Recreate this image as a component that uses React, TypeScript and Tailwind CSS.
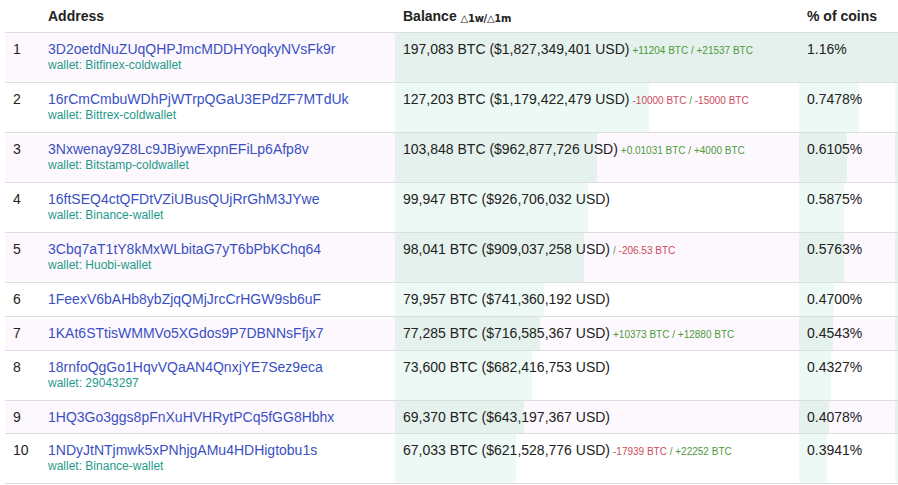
import React from "react";

type Row = {
  n: number;
  addr: string;
  wallet?: string;
  bal: string;
  d1?: { t: string; c: "g" | "r" };
  d2?: { t: string; c: "g" | "r" };
  pct: string;
  bw: number;
  pw: number;
  h: number;
};

const rows: Row[] = [
  { n: 1, addr: "3D2oetdNuZUqQHPJmcMDDHYoqkyNVsFk9r", wallet: "Bitfinex-coldwallet", bal: "197,083 BTC ($1,827,349,401 USD)", d1: { t: "+11204 BTC", c: "g" }, d2: { t: "+21537 BTC", c: "g" }, pct: "1.16%", bw: 404, pw: 96, h: 50 },
  { n: 2, addr: "16rCmCmbuWDhPjWTrpQGaU3EPdZF7MTdUk", wallet: "Bittrex-coldwallet", bal: "127,203 BTC ($1,179,422,479 USD)", d1: { t: "-10000 BTC", c: "r" }, d2: { t: "-15000 BTC", c: "r" }, pct: "0.7478%", bw: 254, pw: 60, h: 50 },
  { n: 3, addr: "3Nxwenay9Z8Lc9JBiywExpnEFiLp6Afp8v", wallet: "Bitstamp-coldwallet", bal: "103,848 BTC ($962,877,726 USD)", d1: { t: "+0.01031 BTC", c: "g" }, d2: { t: "+4000 BTC", c: "g" }, pct: "0.6105%", bw: 202, pw: 48, h: 50 },
  { n: 4, addr: "16ftSEQ4ctQFDtVZiUBusQUjRrGhM3JYwe", wallet: "Binance-wallet", bal: "99,947 BTC ($926,706,032 USD)", pct: "0.5875%", bw: 193, pw: 45, h: 50 },
  { n: 5, addr: "3Cbq7aT1tY8kMxWLbitaG7yT6bPbKChq64", wallet: "Huobi-wallet", bal: "98,041 BTC ($909,037,258 USD)", d2: { t: "-206.53 BTC", c: "r" }, pct: "0.5763%", bw: 189, pw: 45, h: 50 },
  { n: 6, addr: "1FeexV6bAHb8ybZjqQMjJrcCrHGW9sb6uF", bal: "79,957 BTC ($741,360,192 USD)", pct: "0.4700%", bw: 149, pw: 35, h: 34 },
  { n: 7, addr: "1KAt6STtisWMMVo5XGdos9P7DBNNsFfjx7", bal: "77,285 BTC ($716,585,367 USD)", d1: { t: "+10373 BTC", c: "g" }, d2: { t: "+12880 BTC", c: "g" }, pct: "0.4543%", bw: 145, pw: 34, h: 34 },
  { n: 8, addr: "18rnfoQgGo1HqvVQaAN4QnxjYE7Sez9eca", wallet: "29043297", bal: "73,600 BTC ($682,416,753 USD)", pct: "0.4327%", bw: 137, pw: 32, h: 50 },
  { n: 9, addr: "1HQ3Go3ggs8pFnXuHVHRytPCq5fGG8Hbhx", bal: "69,370 BTC ($643,197,367 USD)", pct: "0.4078%", bw: 129, pw: 30, h: 33 },
  { n: 10, addr: "1NDyJtNTjmwk5xPNhjgAMu4HDHigtobu1s", wallet: "Binance-wallet", bal: "67,033 BTC ($621,528,776 USD)", d1: { t: "-17939 BTC", c: "r" }, d2: { t: "+22252 BTC", c: "g" }, pct: "0.3941%", bw: 121, pw: 28, h: 50 },
];

function Delta({ d }: { d: { t: string; c: "g" | "r" } }) {
  return <span className={d.c === "g" ? "text-[#4f9a3c]" : "text-[#cc4a5c]"}>{d.t}</span>;
}

export default function App() {
  return (
    <div className="w-[898px] h-[485px] bg-white pl-[5px] font-['Liberation_Sans',Arial,sans-serif] text-[14px] text-[#222] overflow-hidden">
      <div className="flex h-[33px] border-b border-[#dedede] font-bold leading-4">
        <div className="w-[35px] shrink-0" />
        <div className="w-[355px] shrink-0 pl-2 pt-[8px]">Address</div>
        <div className="w-[404px] shrink-0 pl-2 pt-[8px]">
          Balance{" "}
          <span className="text-[10px] font-bold font-['DejaVu_Sans','Liberation_Sans',sans-serif] tracking-[-0.3px] relative top-[1px]">
            △1w/△1m
          </span>
        </div>
        <div className="w-[96px] shrink-0 pl-2 pt-[8px]">% of coins</div>
        <div className="flex-1" />
      </div>
      {rows.map((r) => {
        const odd = r.n % 2 === 1;
        const bar = odd ? "#e5f1ec" : "#edf9f4";
        return (
          <div
            key={r.n}
            className={`flex border-b border-[#dedede] ${odd ? "bg-[#fdf8fd]" : "bg-white"}`}
            style={{ height: r.h }}
          >
            <div className="w-[35px] shrink-0 pl-2 pt-2 leading-4">{r.n}</div>
            <div className="w-[355px] shrink-0 pl-2 pt-2">
              <div className="leading-4 text-[#3a50c2]">{r.addr}</div>
              {r.wallet && (
                <div className="text-[12px] leading-4 text-[#1f9a8a]">wallet: {r.wallet}</div>
              )}
            </div>
            <div
              className="w-[404px] shrink-0 pl-2 pt-2 leading-4 whitespace-nowrap"
              style={{ background: `linear-gradient(to right, ${bar} ${r.bw}px, transparent ${r.bw}px)` }}
            >
              {r.bal}
              {(r.d1 || r.d2) && (
                <span className="text-[10px] ml-[3px]">
                  {r.d1 && <Delta d={r.d1} />}
                  {r.d2 && (
                    <>
                      <span className="text-[#4f9a3c]">{r.d1 ? " / " : "/ "}</span>
                      <Delta d={r.d2} />
                    </>
                  )}
                </span>
              )}
            </div>
            <div
              className="w-[96px] shrink-0 pl-2 pt-2 leading-4"
              style={{ background: `linear-gradient(to right, ${bar} ${r.pw}px, transparent ${r.pw}px)` }}
            >
              {r.pct}
            </div>
            <div className="flex-1" style={{ background: bar }} />
          </div>
        );
      })}
    </div>
  );
}
